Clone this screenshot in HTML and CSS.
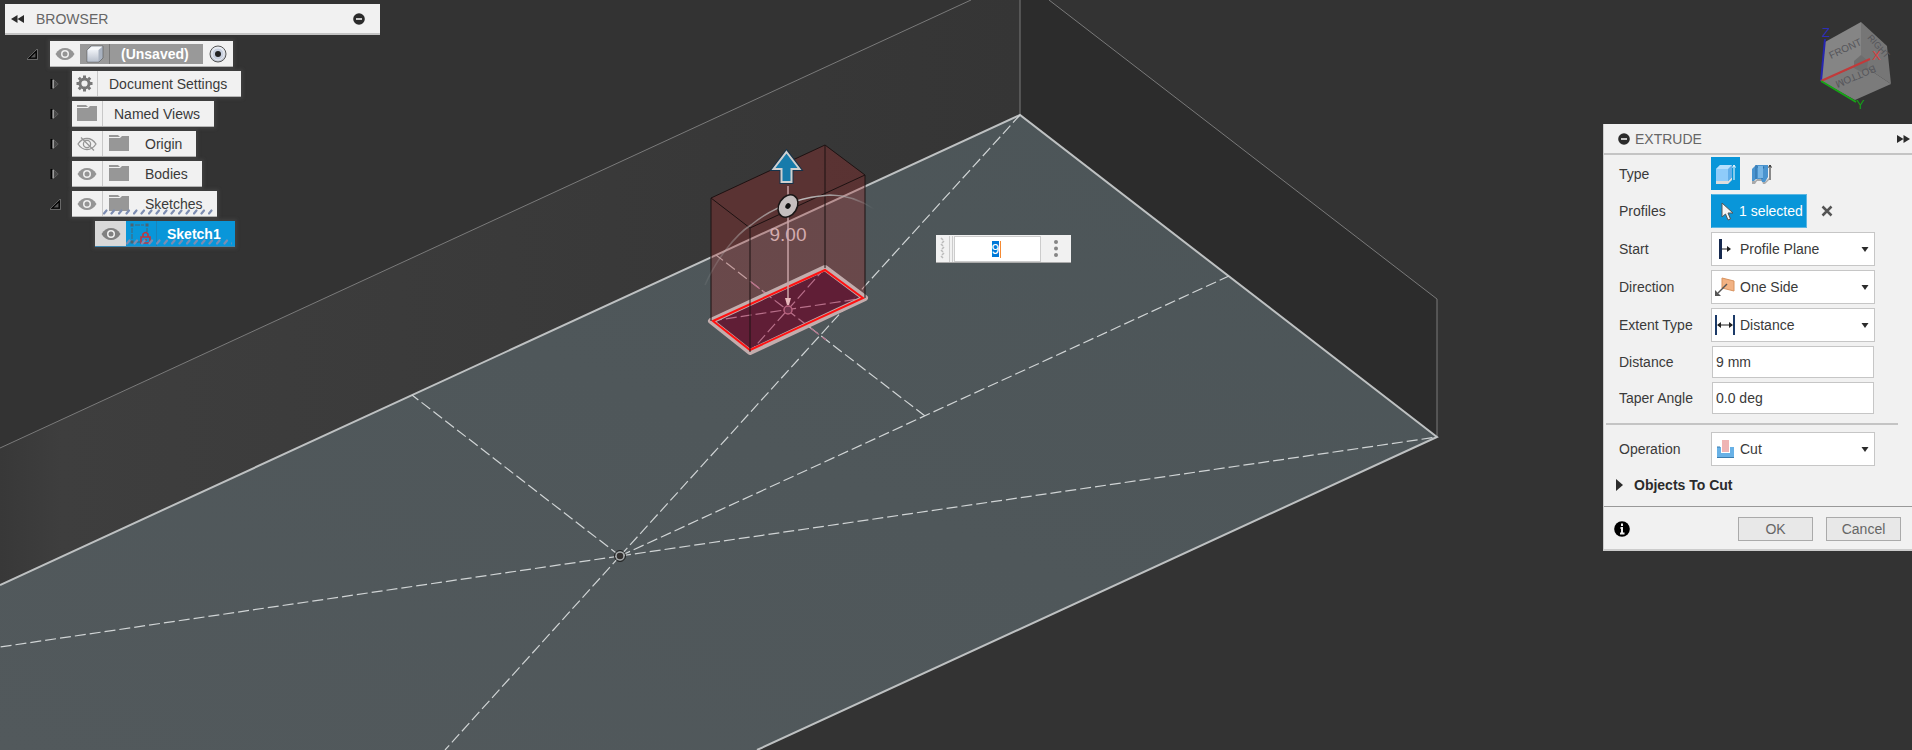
FILE: index.html
```html
<!DOCTYPE html>
<html lang="en">
<head>
<meta charset="utf-8">
<title>Extrude</title>
<link rel="stylesheet" href="styles.css">
</head>
<body>
<svg class="defs" aria-hidden="true">
  <defs>
    <linearGradient id="steel" x1="0" y1="0" x2="0" y2="1"><stop offset="0" stop-color="#eef1f6"/><stop offset="1" stop-color="#b9c0cc"/></linearGradient>
    <pattern id="hatch" width="15" height="6" patternUnits="userSpaceOnUse"><path d="M1 4.500L3.500 1.500M8.500 4.500L11 1.500" stroke="#7d8db2" stroke-width="2.200" stroke-linecap="round"/></pattern>
    <symbol id="eye" viewBox="0 0 20 14"><path d="M.5 7C3 2.800 6.200 1 10 1s7 1.800 9.500 6C17 11.200 13.800 13 10 13S3 11.200.5 7z" fill="currentColor"/><circle cx="10" cy="7" r="4" fill="#f1f1f1"/><circle cx="10" cy="7" r="2.500" fill="currentColor"/></symbol>
    <symbol id="eye-off" viewBox="0 0 20 14"><g fill="none" stroke="currentColor" stroke-width="1.300"><path d="M1 7c2.500-3.800 5.500-5.500 9-5.500S16.500 3.200 19 7c-2.500 3.800-5.500 5.500-9 5.500S3.500 10.800 1 7z"/><circle cx="10" cy="7" r="3.600"/><path d="M4 .5l13 13"/></g></symbol>
    <symbol id="folder" viewBox="0 0 22 17"><path d="M1 0h9l2 2H1zM1 3h11l2-2h7v15H1z" fill="#979797"/></symbol>
    <symbol id="open" viewBox="0 0 12 12"><path d="M10 2.500v7.500h-8z" fill="#555" stroke="#000" stroke-width="1.500"/><path d="M11.500 0v11.500H0M11 0L0 11" fill="none" stroke="#8a8a8a" stroke-width=".7"/></symbol>
    <symbol id="closed" viewBox="0 0 12 12"><path d="M3.500 1L9 6l-5.500 5z" fill="#484848" stroke="#666" stroke-width=".8"/><path d="M1.500 .5v11" stroke="#000" stroke-width="2"/><path d="M3.500 1.500v9" stroke="#a5a5a5" stroke-width="1.500"/></symbol>
    <symbol id="minus" viewBox="0 0 12 12"><circle cx="6" cy="6" r="5.800" fill="#2b2b2b"/><path d="M3 6h6" stroke="#f1f1f1" stroke-width="1.600"/></symbol>
    <symbol id="caret" viewBox="0 0 8 5"><path d="M.5 0h7L4 5z" fill="#2b2b2b"/></symbol>
  </defs>
</svg>

<svg class="viewport" viewBox="0 0 1912 750" preserveAspectRatio="xMinYMin slice" role="img" aria-label="Model view">
  <defs>
    <linearGradient id="wall"><stop offset="0" stop-color="#383838"/><stop offset=".06" stop-color="#3e3e3e"/><stop offset=".5" stop-color="#3a3a3a"/><stop offset="1" stop-color="#353535"/></linearGradient>
    <linearGradient id="floor" x1="0" y1="1" x2="1" y2="0"><stop offset="0" stop-color="#52595c"/><stop offset="1" stop-color="#4c5558"/></linearGradient>
    <linearGradient id="arc"><stop offset="0" stop-color="#bbb" stop-opacity=".1"/><stop offset=".4" stop-color="#b5b0b0" stop-opacity=".8"/><stop offset=".5" stop-color="#ccc"/><stop offset=".8" stop-color="#aaa" stop-opacity=".8"/><stop offset="1" stop-color="#aaa" stop-opacity="0"/></linearGradient>
  </defs>
  <path d="M0 448L971 0h49v115L0 585z" fill="url(#wall)"/>
  <path d="M1020 0h29l388 299v138L1020 115z" fill="#2c2c2c"/>
  <path d="M0 585L1020 115l417 322L757 750H0z" fill="url(#floor)"/>
  <path d="M0 448L971 0M1020 0v115M1049 0l388 299v138" fill="none" stroke="#7a7a7a"/>
  <path d="M0 585L1020 115l417 322L757 750" fill="none" stroke="#bec1c2" stroke-width="2"/>
  <g fill="none" stroke="#d0d4d5" stroke-width="1.200" stroke-dasharray="11 4">
    <path d="M620 556L1437 437M620 556L0 647M620 556L1020 115M620 556L445 750M620 556L412 395M620 556L1229 276M925 416L716 255"/>
  </g>
  <circle cx="620" cy="556" r="4" fill="#33302f" stroke="#a7abac" stroke-width="1.500"/>
  <circle cx="620" cy="556" r="5.500" fill="none" stroke="#222"/>
  <path d="M711 198l114-53 40 30v123l-115 54-39-31z" fill="#a82b2b" fill-opacity=".31"/>
  <path d="M711 321l114-53 40 30-115 54z" fill="#5e1833" fill-opacity=".88"/>
  <path d="M711 321L865 298M825 268L750 352M751 282L826 340" fill="none" stroke="#b8708a" stroke-width="1.200" stroke-dasharray="11 4"/>
  <path d="M711 321l114-53 40 30-115 54z" fill="none" stroke="#c3adad" stroke-width="6" stroke-linejoin="round"/>
  <path d="M713 321l112-51 38 28-113 52z" fill="none" stroke="#f11" stroke-width="2"/>
  <path d="M711 198l114-53 40 30-115 53z M711 198v123M825 145v123M865 175v123M750 228v124" fill="none" stroke="#1d1212"/>
  <circle cx="788" cy="310" r="4" fill="#70304a" stroke="#b8637f" stroke-width="1.500"/>
  <path d="M705 285C716 260 735 235 751 225C772 208 800 197 830 195C848 195 862 201 874 209" fill="none" stroke="url(#arc)" stroke-width="1.500"/>
  <path d="M788 186v116" stroke="#c9a3a6" stroke-width="1.500"/><path d="M785 298h6l-2 7h-2z" fill="#e8b9bd"/>
  <g transform="rotate(32 788 206)"><ellipse cx="788" cy="206" rx="9" ry="12" fill="#c5bfbf" stroke="#191616" stroke-width="1.500"/><ellipse cx="788" cy="206" rx="2.500" ry="3" fill="#111"/></g>
  <path d="M786.500 152l13 17h-8v13h-10v-13h-8z" fill="#177bab" stroke="#14334b" stroke-width="4"/>
  <path d="M786.500 152l13 17h-8v13h-10v-13h-8z" fill="#177bab" stroke="#cfcfcf" stroke-width="2"/>
  <text class="dim" x="788" y="241" text-anchor="middle">9.00</text>
</svg>

<main class="workspace">
  <section class="browser" aria-label="Browser">
    <header class="bar">
      <button class="plain" aria-label="Collapse"><svg width="13" height="8" viewBox="0 0 13 8"><path d="M6.500 0v8L0 4zM13 0v8L6.500 4z" fill="#2b2b2b"/></svg></button>
      <h2 class="title">BROWSER</h2>
      <button class="plain push" aria-label="Minimise"><svg width="12" height="12"><use href="#minus"/></svg></button>
    </header>
    <ul class="tree">
      <li class="node root">
        <button class="twisty" aria-label="Collapse"><svg width="11" height="11"><use href="#open"/></svg></button>
        <div class="chip">
          <span class="cell"><svg class="eye" width="20" height="14"><use href="#eye"/></svg></span>
          <span class="active">
            <span class="cell lined"><svg width="18" height="18" viewBox="0 0 18 18"><path d="M1 5l4-4h12v12l-4 4H1z" fill="#a9b2c0" stroke="#555" stroke-width=".6"/><path d="M1.500 5h11v11.500h-11z" fill="url(#steel)"/><path d="M1.500 5l4-3.500h11L12.500 5z" fill="#f6f8fa"/></svg></span>
            <span class="name strong">(Unsaved)</span>
          </span>
          <span class="cell"><svg width="18" height="18" viewBox="0 0 18 18"><circle cx="9" cy="9" r="8" fill="url(#steel)" stroke="#555"/><circle cx="9" cy="9" r="6" fill="#c8d0df" stroke="#e8ebf2"/><circle cx="9" cy="9" r="3" fill="#222"/></svg></span>
        </div>
      </li>
      <li class="node">
        <button class="twisty" aria-label="Expand"><svg width="11" height="12"><use href="#closed"/></svg></button>
        <div class="chip"><span class="cell small lined"><svg width="17" height="17" viewBox="-8.500 -8.500 17 17"><circle r="4.600" fill="none" stroke="#777" stroke-width="3"/><path d="M0-5.500V-8M0 5.500V8M-5.500 0H-8M5.500 0H8M-4-4l-1.700-1.700M4 4l1.700 1.700M-4 4l-1.700 1.700M4-4l1.700-1.700" stroke="#777" stroke-width="3"/></svg></span><span class="name">Document Settings</span></div>
      </li>
      <li class="node">
        <button class="twisty" aria-label="Expand"><svg width="11" height="12"><use href="#closed"/></svg></button>
        <div class="chip"><span class="cell lined"><svg width="22" height="17"><use href="#folder"/></svg></span><span class="name">Named Views</span></div>
      </li>
      <li class="node">
        <button class="twisty" aria-label="Expand"><svg width="11" height="12"><use href="#closed"/></svg></button>
        <div class="chip"><span class="cell lined"><svg class="eye" width="20" height="14"><use href="#eye-off"/></svg></span><span class="cell"><svg width="22" height="17"><use href="#folder"/></svg></span><span class="name">Origin</span></div>
      </li>
      <li class="node">
        <button class="twisty" aria-label="Expand"><svg width="11" height="12"><use href="#closed"/></svg></button>
        <div class="chip"><span class="cell lined"><svg class="eye" width="20" height="14"><use href="#eye"/></svg></span><span class="cell"><svg width="22" height="17"><use href="#folder"/></svg></span><span class="name">Bodies</span></div>
      </li>
      <li class="node">
        <button class="twisty" aria-label="Collapse"><svg width="11" height="11"><use href="#open"/></svg></button>
        <div class="chip"><span class="cell lined"><svg class="eye" width="20" height="14"><use href="#eye"/></svg></span><span class="cell"><svg width="22" height="17"><use href="#folder"/></svg></span><span class="name">Sketches</span><svg class="hatch"><rect width="100%" height="6" fill="url(#hatch)"/></svg></div>
      </li>
      <li class="node leaf">
        <div class="chip selected"><span class="cell off"><svg class="eye" width="20" height="14"><use href="#eye"/></svg></span><span class="cell lined"><svg width="22" height="22" viewBox="0 0 22 22"><path d="M5 2h9M2 5v12M17 5v4M5 19h6" stroke="#4e6270" stroke-dasharray="5 1"/><path d="M.5.500h3v3h-3zM15.500.5h3v3h-3zM.5 17.500h3v3h-3z" fill="#4e6270"/><path d="M11 14h9v6h-9zM13 14v-3q2.500-3 5 0v3M14 17h3" fill="none" stroke="#c3343c" stroke-width="1.600"/></svg></span><span class="name strong">Sketch1</span><svg class="hatch"><rect width="100%" height="6" fill="url(#hatch)"/></svg></div>
      </li>
    </ul>
  </section>

  <div class="side">
    <svg class="cube" width="112" height="110" viewBox="0 0 112 110" role="img" aria-label="View cube">
      <path d="M25 32L61 12v42L21 71z" fill="#858585"/>
      <path d="M61 12l26 24 4 38-30-20z" fill="#767676"/>
      <path d="M21 71l40-17 30 20-36 16z" fill="#7b7b7b"/>
      <path d="M54 51l7-6 7 6-1 8-6 3-7-4z" fill="#6e6e6e"/>
      <text class="face" transform="translate(31 49) rotate(-25)">FRONT</text>
      <text class="face tiny" transform="translate(67 28) rotate(48)">RIGHT</text>
      <text class="face" transform="translate(74 55) rotate(157)">BOTTOM</text>
      <path d="M21 71l4-42" stroke="#2626b0" stroke-width="2"/>
      <path d="M21 71l49-22" stroke="#c23a3a" stroke-width="2"/>
      <path d="M21 71l35 21" stroke="#16a516" stroke-width="2"/>
      <text class="axis z" x="22" y="27">Z</text><text class="axis x" x="72" y="50">X</text><text class="axis y" x="56" y="99">Y</text>
    </svg>

    <form class="extrude">
      <header class="bar">
        <button type="button" class="plain" aria-label="Minimise"><svg width="12" height="12"><use href="#minus"/></svg></button>
        <h2 class="title">EXTRUDE</h2>
        <button type="button" class="plain push" aria-label="Dock"><svg width="13" height="8" viewBox="0 0 13 8"><path d="M0 0v8l6.500-4zM6.500 0v8L13 4z" fill="#2b2b2b"/></svg></button>
      </header>
      <div class="fields">
        <span>Type</span>
        <div class="types">
          <button type="button" class="kind on" aria-label="Extrude"><svg width="20" height="20" viewBox="0 0 20 20"><path d="M0 17h12l4-4v3l-4 4H0z" fill="#ddd"/><path d="M0 5l4-4h12v12l-4 4H0z" fill="#62aee9"/><path d="M0 5h12v12H0z" fill="#8fccfa"/><path d="M0 5l4-4h12l-4 4z" fill="#b7e0fd"/><path d="M18 16V2M16.500 3.500L18 1l1.500 2.500" stroke="#fff" fill="none"/></svg></button>
          <button type="button" class="kind" aria-label="Thin extrude"><svg width="20" height="20" viewBox="0 0 20 20"><path d="M0 17l3 0 2-2h5l1 3h2l4-4v2l-4 4h-2l-1-3H5l-2 3H0z" fill="#aaa"/><path d="M0 5l4-4h12v12l-3 5-3 0-1-3H4l-2 2H0z" fill="#4a94cf"/><path d="M4 1v14M5 3h7l-2 3v9" stroke="#2e6fa5" fill="none"/><path d="M6 2h5v12H6z" fill="#77b6e6"/><path d="M18 16V2M16.500 3.500L18 1l1.500 2.500" stroke="#222" fill="none"/></svg></button>
        </div>
        <span>Profiles</span>
        <div class="profiles">
          <button type="button" class="pick"><svg width="13" height="19" viewBox="0 0 13 19"><path d="M1 1v14l3.500-3 2.500 6 2.500-1-2.500-6h5z" fill="#f5f5f5" stroke="#555"/></svg>1 selected</button>
          <button type="button" class="plain" aria-label="Clear"><svg width="12" height="12" viewBox="0 0 12 12"><path d="M1.500 1.500l9 9M10.500 1.500l-9 9" stroke="#555" stroke-width="2.500"/></svg></button>
        </div>
        <label for="start">Start</label>
        <div class="combo"><select id="start"><option>Profile Plane</option></select>
          <svg class="icon" width="22" height="20" viewBox="0 0 22 20"><path d="M6.500 0v20" stroke="#16294f" stroke-width="3"/><path d="M8 10h7" stroke="#222"/><path d="M13 7l4 3-4 3z" fill="#222"/></svg><svg class="drop" width="8" height="5"><use href="#caret"/></svg></div>
        <label for="direction">Direction</label>
        <div class="combo"><select id="direction"><option>One Side</option></select>
          <svg class="icon" width="22" height="20" viewBox="0 0 22 20"><path d="M8 1l12 3v10L8 11z" fill="#f2b283" stroke="#d8935f"/><path d="M13 7L4 16" stroke="#555" stroke-width="1.500"/><path d="M1 13v6h6z" fill="#555"/></svg><svg class="drop" width="8" height="5"><use href="#caret"/></svg></div>
        <label for="extent">Extent Type</label>
        <div class="combo"><select id="extent"><option>Distance</option></select>
          <svg class="icon" width="22" height="20" viewBox="0 0 22 20"><path d="M2 0v20M20 0v20" stroke="#1b3a68" stroke-width="2"/><path d="M4 10h14" stroke="#222"/><path d="M7 7l-4 3 4 3zM15 7l4 3-4 3z" fill="#222"/></svg><svg class="drop" width="8" height="5"><use href="#caret"/></svg></div>
        <label for="distance">Distance</label>
        <input class="text" id="distance" value="9 mm">
        <label for="taper">Taper Angle</label>
        <input class="text" id="taper" value="0.0 deg">
        <hr class="rule">
        <label for="operation">Operation</label>
        <div class="combo"><select id="operation"><option>Cut</option></select>
          <svg class="icon" width="22" height="20" viewBox="0 0 22 20"><path d="M3 8h4v6h9V8h4v10H3z" fill="#68b1e6"/><path d="M3 18.500h17M3 8h3" stroke="#3b7cae"/><path d="M8 1h7v12H8z" fill="#efb4b4"/></svg><svg class="drop" width="8" height="5"><use href="#caret"/></svg></div>
        <button type="button" class="more"><svg width="7" height="12" viewBox="0 0 7 12"><path d="M0 0l7 6-7 6z" fill="#2b2b2b"/></svg>Objects To Cut</button>
      </div>
      <footer class="actions">
        <button type="button" class="plain" aria-label="Information"><svg width="16" height="16" viewBox="0 0 16 16"><circle cx="8" cy="8" r="7.800"/><path d="M8 2.500v2.500M6.500 7H8v5M6 12.500h4.500" stroke="#f1f1f1" stroke-width="2" fill="none"/></svg></button>
        <button type="button" class="action push">OK</button>
        <button type="button" class="action">Cancel</button>
      </footer>
    </form>
  </div>

  <div class="value">
    <svg width="5" height="24" viewBox="0 0 5 24"><path d="M1 1l2 2M4 4l-2 2M1 7l2 2M4 10l-2 2M1 13l2 2M4 16l-2 2M1 19l2 2" stroke="#bbb" stroke-width="1.500"/></svg>
    <span class="grip"></span>
    <input class="amount" aria-label="Distance value" value="9">
    <span class="mark"></span>
    <button class="plain" aria-label="More"><svg width="4" height="17" viewBox="0 0 4 17"><g fill="#858585"><circle cx="2" cy="2" r="2"/><circle cx="2" cy="8.500" r="2"/><circle cx="2" cy="15" r="2"/></g></svg></button>
  </div>
</main>
<script src="main.js"></script>
</body>
</html>
```
FILE: main.js
```js
const amount = document.querySelector('.amount');
amount.focus();
amount.select();
```
FILE: styles.css
```css
* { box-sizing: border-box; }
body {
  margin: 0;
  min-height: 100vh;
  overflow: hidden;
  background: #333;
  color: #3a3a3a;
  font: 14px/18px "Liberation Sans", Arial, sans-serif;
}
svg { display: block; flex: none; }
button, input, select { font: inherit; color: inherit; border-radius: 0; outline: none; }
.defs { position: absolute; width: 0; height: 0; }
.viewport { position: absolute; top: 0; left: 0; width: 100%; height: 100%; }
.dim { font-size: 19px; fill: #d3abae; }
.workspace { position: relative; display: flex; justify-content: space-between; align-items: flex-start; }
.plain { display: flex; align-items: center; padding: 0; border: 0; background: none; }
.push { margin-left: auto; }
.bar { display: flex; align-items: center; height: 31px; background: #f1f1f1; border-bottom: 2px solid #c4c4c4; }
.title { margin: 0; font-size: 14px; font-weight: 400; color: #666; }

.browser { width: 380px; padding: 4px 0 0 5px; }
.browser .bar { padding: 0 15px 0 6px; gap: 12px; margin-bottom: 6px; }
.tree { margin: 0; padding: 0; list-style: none; display: flex; flex-direction: column; gap: 4px; }
.node { display: flex; align-items: center; padding-left: 45px; }
.root { padding-left: 22px; }
.leaf { padding-left: 90px; }
.twisty { display: flex; width: 22px; padding: 0; border: 0; background: none; }
.root .twisty { width: 23px; }
.chip {
  position: relative;
  display: flex;
  align-items: center;
  height: 26px;
  background: #f1f1f1;
  border-bottom: 1px solid #b5b5b5;
  box-shadow: 0 0 3px 2px rgba(90, 90, 90, .35);
}
.cell { display: flex; align-items: center; justify-content: center; width: 31px; height: 100%; }
.root .cell { width: 30px; }
.small { width: 26px; }
.lined { border-right: 1px solid #c8c8c8; }
.eye { color: #959595; }
.name { padding: 0 14px 0 11px; white-space: nowrap; }
.active { display: flex; align-items: center; height: 20px; background: #999; color: #fff; }
.active .lined { border-color: #777; }
.strong { font-weight: 700; }
.selected { background: #0996d9; border-color: #3f86b0; color: #fff; }
.selected .lined { border-color: #1b83b8; }
.selected .name { padding-left: 10px; }
.off { background: #d9d9d9; }
.off .eye { color: #808080; }
.hatch { position: absolute; left: 31px; bottom: 1px; width: calc(100% - 34px); height: 6px; }

.side { width: 309px; }
.cube { margin: 10px 0 4px auto; }
.face { font-size: 10px; fill: #55555a; }
.tiny { font-size: 9px; }
.axis { font-size: 13px; }
.x { fill: #d84040; }
.y { fill: #169c16; }
.z { fill: #2e2eb8; }

.extrude { background: #f1f1f1; border-left: 1px solid #ccc; border-bottom: 2px solid #ccc; }
.extrude .bar { padding: 0 2px 0 14px; gap: 5px; }
.fields {
  display: grid;
  grid-template-columns: 92px 164px;
  gap: 4px 0;
  align-items: center;
  padding: 2px 0 6px 15px;
}
.types, .profiles { display: flex; align-items: center; }
.types { gap: 7px; }
.profiles { gap: 14px; }
.kind { display: flex; align-items: center; justify-content: center; width: 29px; height: 33px; padding: 0; border: 0; background: none; }
.on { background: #0996d9; }
.pick { display: flex; align-items: center; gap: 5px; width: 96px; height: 34px; padding: 0 0 0 9px; border: 1px solid #5bb6e2; border-left-color: #0996d9; background: #0996d9; color: #fff; white-space: nowrap; }
.combo { display: grid; align-items: center; }
.combo > * { grid-area: 1 / 1; }
.combo select { width: 100%; height: 34px; padding: 0 24px 0 28px; appearance: none; border: 1px solid #c6c6c6; background: #fff; }
.icon { margin-left: 3px; pointer-events: none; }
.drop { justify-self: end; margin-right: 6px; pointer-events: none; }
.text { width: 162px; height: 32px; margin-left: 1px; padding: 0 3px; border: 1px solid #c6c6c6; background: #fff; }
.rule { grid-column: 1 / -1; width: 292px; height: 2px; margin: 5px 0 3px -13px; border: 0; background: #c4c4c4; }
.more { grid-column: 1 / -1; display: flex; align-items: center; gap: 11px; height: 30px; padding: 0; margin-left: -3px; border: 0; background: none; color: #2b2b2b; font-weight: 700; }
.actions { display: flex; align-items: center; gap: 13px; padding: 10px 11px 8px 10px; border-top: 1px solid #999; }
.action { width: 75px; height: 24px; padding: 0; border: 1px solid #aaa; background: #e8e8e8; color: #666; }

.value {
  position: absolute;
  top: 235px;
  left: 936px;
  display: flex;
  align-items: center;
  width: 135px;
  height: 28px;
  padding: 0 13px 0 4px;
  background: #f1f1f1;
  border-bottom: 1px solid #aaa;
}
.grip { width: 4px; height: 26px; margin: 0 1px 0 4px; border: 1px solid #ccc; border-width: 0 1px; }
.amount { width: 87px; height: 26px; margin-right: 13px; padding: 0 4px 0 0; border: 1px solid #ccc; background: #fff; text-align: center; }
.amount::selection { background: #0078d7; color: #fff; }
.mark { position: absolute; left: 64px; top: 6px; width: 1px; height: 17px; background: #f58a33; }
```
